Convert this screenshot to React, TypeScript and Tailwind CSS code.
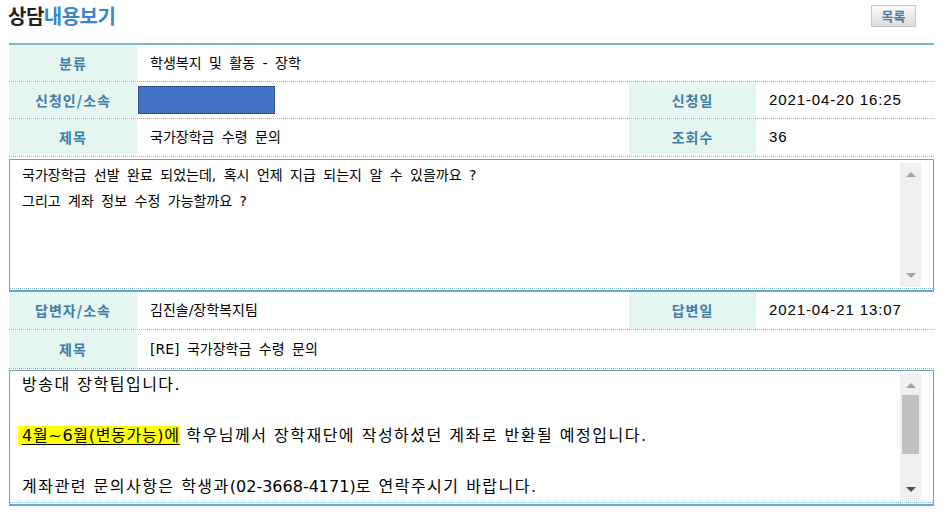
import type { ReactNode } from 'react';

const FONT = '"DejaVu Sans", "Noto Sans CJK KR", sans-serif';
const KR = '"Noto Sans CJK KR", sans-serif';
const NUM = '"Liberation Sans", sans-serif';

function Label({ children, className = '' }: { children: ReactNode; className?: string }) {
  return (
    <div
      className={`flex items-center justify-center bg-[#e5f6f1] text-[14px] font-bold tracking-[1px] text-[#3f7daa] ${className}`}
      style={{ fontFamily: KR }}
    >
      {children}
    </div>
  );
}

function Value({ children, className = '', pad = 'pl-[13px]' }: { children: ReactNode; className?: string; pad?: string }) {
  return <div className={`flex items-center ${pad} text-[14px] text-black ${className}`}>{children}</div>;
}

function Num({ children }: { children: ReactNode }) {
  return (
    <span className="text-[15px] tracking-[0.9px]" style={{ fontFamily: NUM }}>
      {children}
    </span>
  );
}

function Row({ children, h = 'h-[37px]' }: { children: ReactNode; h?: string }) {
  return <div className={`flex ${h} border-b border-dotted border-[#86b3c8]`}>{children}</div>;
}

function Scrollbar({ thumb }: { thumb?: boolean }) {
  return (
    <div className="relative flex w-[21px] flex-col items-center justify-between bg-[#f0f0f0] py-[9px]">
      <div className="h-0 w-0 border-x-[5px] border-b-[5px] border-x-transparent border-b-[#a3a3a3]" />
      {thumb && <div className="absolute left-[2px] top-[21px] h-[59px] w-[17px] bg-[#c1c1c1]" />}
      <div className={`h-0 w-0 border-x-[5px] border-t-[5px] border-x-transparent ${thumb ? 'border-t-[#505050]' : 'border-t-[#a3a3a3]'}`} />
    </div>
  );
}

function ContentBox({ children, height, thumb, mt, size }: { children: ReactNode; height: string; thumb?: boolean; mt: string; size: string }) {
  return (
    <div className={`${mt} border-x border-t border-b-2 border-x-[#6aa5c2] border-t-[#6aa5c2] border-b-[#6aa8c4]`}>
      <div className={`flex ${height} pr-[12px]`}>
        <div className={`flex-1 pl-[12px] ${size} leading-[25.5px] text-black`}>{children}</div>
        <div className="flex pb-[1px] pt-[3px]">
          <Scrollbar thumb={thumb} />
        </div>
      </div>
      <div className="mb-[1px] border-b border-dotted border-[#86b3c8]" />
    </div>
  );
}

export default function App() {
  return (
    <div className="h-[512px] w-[943px] overflow-hidden bg-white" style={{ fontFamily: FONT }}>
      <div className="flex h-[43px] items-start justify-between pl-[8px] pr-[27px]">
        <h1 className="mt-[1px] text-[20px] font-bold tracking-[-0.5px]" style={{ fontFamily: KR }}>
          <span className="text-[#222]">상담</span>
          <span className="text-[#3a86c8]">내용보기</span>
        </h1>
        <button
          className="mt-[5px] flex h-[22px] w-[45px] items-center justify-center border border-[#c6c6c6] bg-gradient-to-b from-[#fafafa] to-[#dcdcdc] text-[13px] font-bold text-[#4a7ca3]"
          style={{ fontFamily: KR }}
        >
          목록
        </button>
      </div>

      <div className="ml-[9px] w-[925px] border-t-2 border-[#7db6cc]">
        <Row>
          <Label className="w-[128px]">분류</Label>
          <Value className="[word-spacing:3px]">학생복지 및 활동 - 장학</Value>
        </Row>
        <Row>
          <Label className="w-[128px]">신청인/소속</Label>
          <Value className="w-[492px]" pad="pl-[1px]">
            <div className="h-[28px] w-[137px] border border-[#2f528f] bg-[#4472c4]" />
          </Value>
          <Label className="w-[127px]">신청일</Label>
          <Value><Num>2021-04-20 16:25</Num></Value>
        </Row>
        <Row h="h-[38px]">
          <Label className="w-[128px]">제목</Label>
          <Value className="w-[492px] [word-spacing:3px]">국가장학금 수령 문의</Value>
          <Label className="w-[127px]">조회수</Label>
          <Value><Num>36</Num></Value>
        </Row>

        <ContentBox height="h-[128px]" mt="mt-[2px]" size="text-[14px] [word-spacing:3px]">
          <div className="pt-[3px]">
            <div>국가장학금 선발 완료 되었는데, 혹시 언제 지급 되는지 알 수 있을까요 ?</div>
            <div>그리고 계좌 정보 수정 가능할까요 ?</div>
          </div>
        </ContentBox>

        <Row h="h-[38px]">
          <Label className="w-[128px]">답변자/소속</Label>
          <Value className="w-[492px]">김진솔/장학복지팀</Value>
          <Label className="w-[127px]">답변일</Label>
          <Value><Num>2021-04-21 13:07</Num></Value>
        </Row>
        <Row h="h-[39px]">
          <Label className="w-[128px]">제목</Label>
          <Value className="[word-spacing:3px]">[RE] 국가장학금 수령 문의</Value>
        </Row>

        <ContentBox height="h-[131px]" thumb mt="mt-[1px]" size="text-[16px] tracking-[1.5px]">
          <div className="pt-[1px]">
            <div>방송대 장학팀입니다.</div>
            <div>&nbsp;</div>
            <div>
              <span className="-ml-[4px] bg-[#ffff00] pl-[4px] tracking-[0.7px] underline underline-offset-[3px]">4월~6월(변동가능)에</span> 학우님께서 장학재단에 작성하셨던 계좌로 반환될 예정입니다.
            </div>
            <div>&nbsp;</div>
            <div>
              계좌관련 문의사항은 학생과<span className="tracking-normal">(02-3668-4171)</span>로 연락주시기 바랍니다.
            </div>
          </div>
        </ContentBox>
      </div>
    </div>
  );
}
